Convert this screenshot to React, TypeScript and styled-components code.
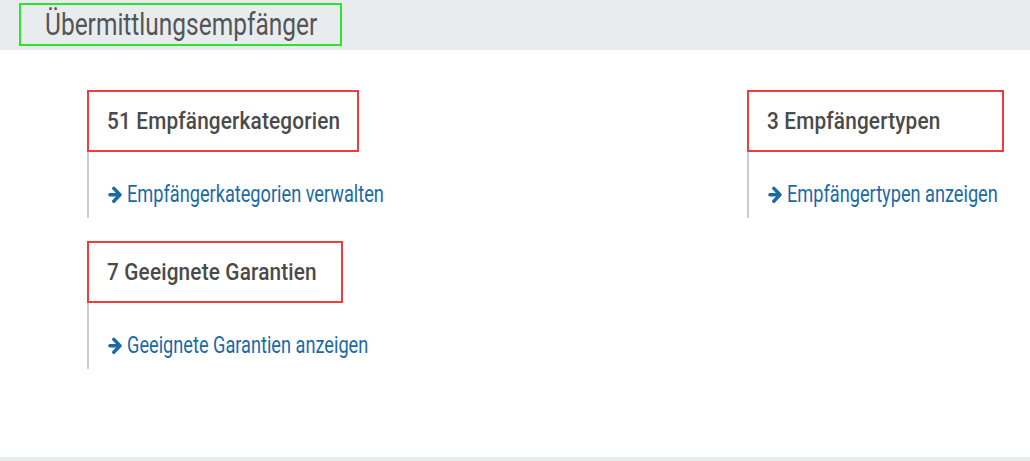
import React from 'react';
import styled, { createGlobalStyle } from 'styled-components';

const GlobalStyle = createGlobalStyle`
  html, body {
    margin: 0;
    padding: 0;
    background: #ffffff;
  }
  * { box-sizing: border-box; }
`;

const Page = styled.div`
  display: flex;
  flex-direction: column;
  height: 461px;
  font-family: Roboto, "Liberation Sans", sans-serif;
`;

const Header = styled.div`
  height: 50px;
  background: #e9ecef;
  padding: 3px 0 0 19px;
`;

const HeaderBox = styled.div`
  width: 323px;
  height: 43px;
  border: 2px solid #2ee52e;
  padding-left: 24px;
  display: flex;
  align-items: center;
`;

// Roboto squeezed to get the condensed look of the original face
const Narrow = styled.span<{ $scale: number }>`
  display: inline-block;
  white-space: nowrap;
  transform: scaleX(${p => p.$scale});
  transform-origin: left center;
`;

const HeaderTitle = styled(Narrow)`
  font-size: 31px;
  font-weight: 400;
  color: #555555;
`;

const Body = styled.div`
  flex: 1;
  padding: 40px 0 0 87px;
  display: grid;
  grid-template-columns: 660px auto;
  grid-auto-rows: 128px;
  row-gap: 23px;
  align-content: start;
`;

const Footer = styled.div`
  height: 4px;
  background: #e9ecef;
`;

const Card = styled.div`
  border-left: 2px solid #cccccc;
  display: flex;
  flex-direction: column;
`;

const CardTitle = styled.div<{ $width: number }>`
  width: ${p => p.$width}px;
  height: 62px;
  margin-left: -2px;
  border: 2px solid #f23b3b;
  padding-left: 18px;
  display: flex;
  align-items: center;
`;

const TitleText = styled(Narrow)`
  font-size: 24px;
  font-weight: 500;
  color: #4a4a4a;
  letter-spacing: 0.2px;
`;

const CardLink = styled.a`
  margin-top: 30px;
  padding-left: 19px;
  height: 24px;
  display: flex;
  align-items: center;
  gap: 5px;
  color: #1a6aa6;
  text-decoration: none;
  cursor: pointer;
`;

const LinkText = styled(Narrow)`
  font-size: 23px;
  font-weight: 400;
`;

const Arrow = styled.svg`
  width: 14px;
  height: 17px;
  flex: none;
`;

const ArrowIcon = () => (
  <Arrow viewBox="0 0 14 17" fill="none" stroke="currentColor" strokeWidth={3.4} strokeLinecap="round" strokeLinejoin="round">
    <path d="M1.9 8.8H11.4" />
    <path d="M5.8 2.4L12 8.8L5.8 15.2" />
  </Arrow>
);

const cards = [
  { title: '51 Empfängerkategorien', link: 'Empfängerkategorien verwalten', width: 272 },
  { title: '3 Empfängertypen', link: 'Empfängertypen anzeigen', width: 257 },
  { title: '7 Geeignete Garantien', link: 'Geeignete Garantien anzeigen', width: 256 },
];

export default function App() {
  return (
    <>
      <GlobalStyle />
      <Page>
        <Header>
          <HeaderBox>
            <HeaderTitle $scale={0.79}>Übermittlungsempfänger</HeaderTitle>
          </HeaderBox>
        </Header>
        <Body>
          {cards.map(c => (
            <Card key={c.title}>
              <CardTitle $width={c.width}>
                <TitleText $scale={0.865}>{c.title}</TitleText>
              </CardTitle>
              <CardLink>
                <ArrowIcon />
                <LinkText $scale={0.79}>{c.link}</LinkText>
              </CardLink>
            </Card>
          ))}
        </Body>
        <Footer />
      </Page>
    </>
  );
}
